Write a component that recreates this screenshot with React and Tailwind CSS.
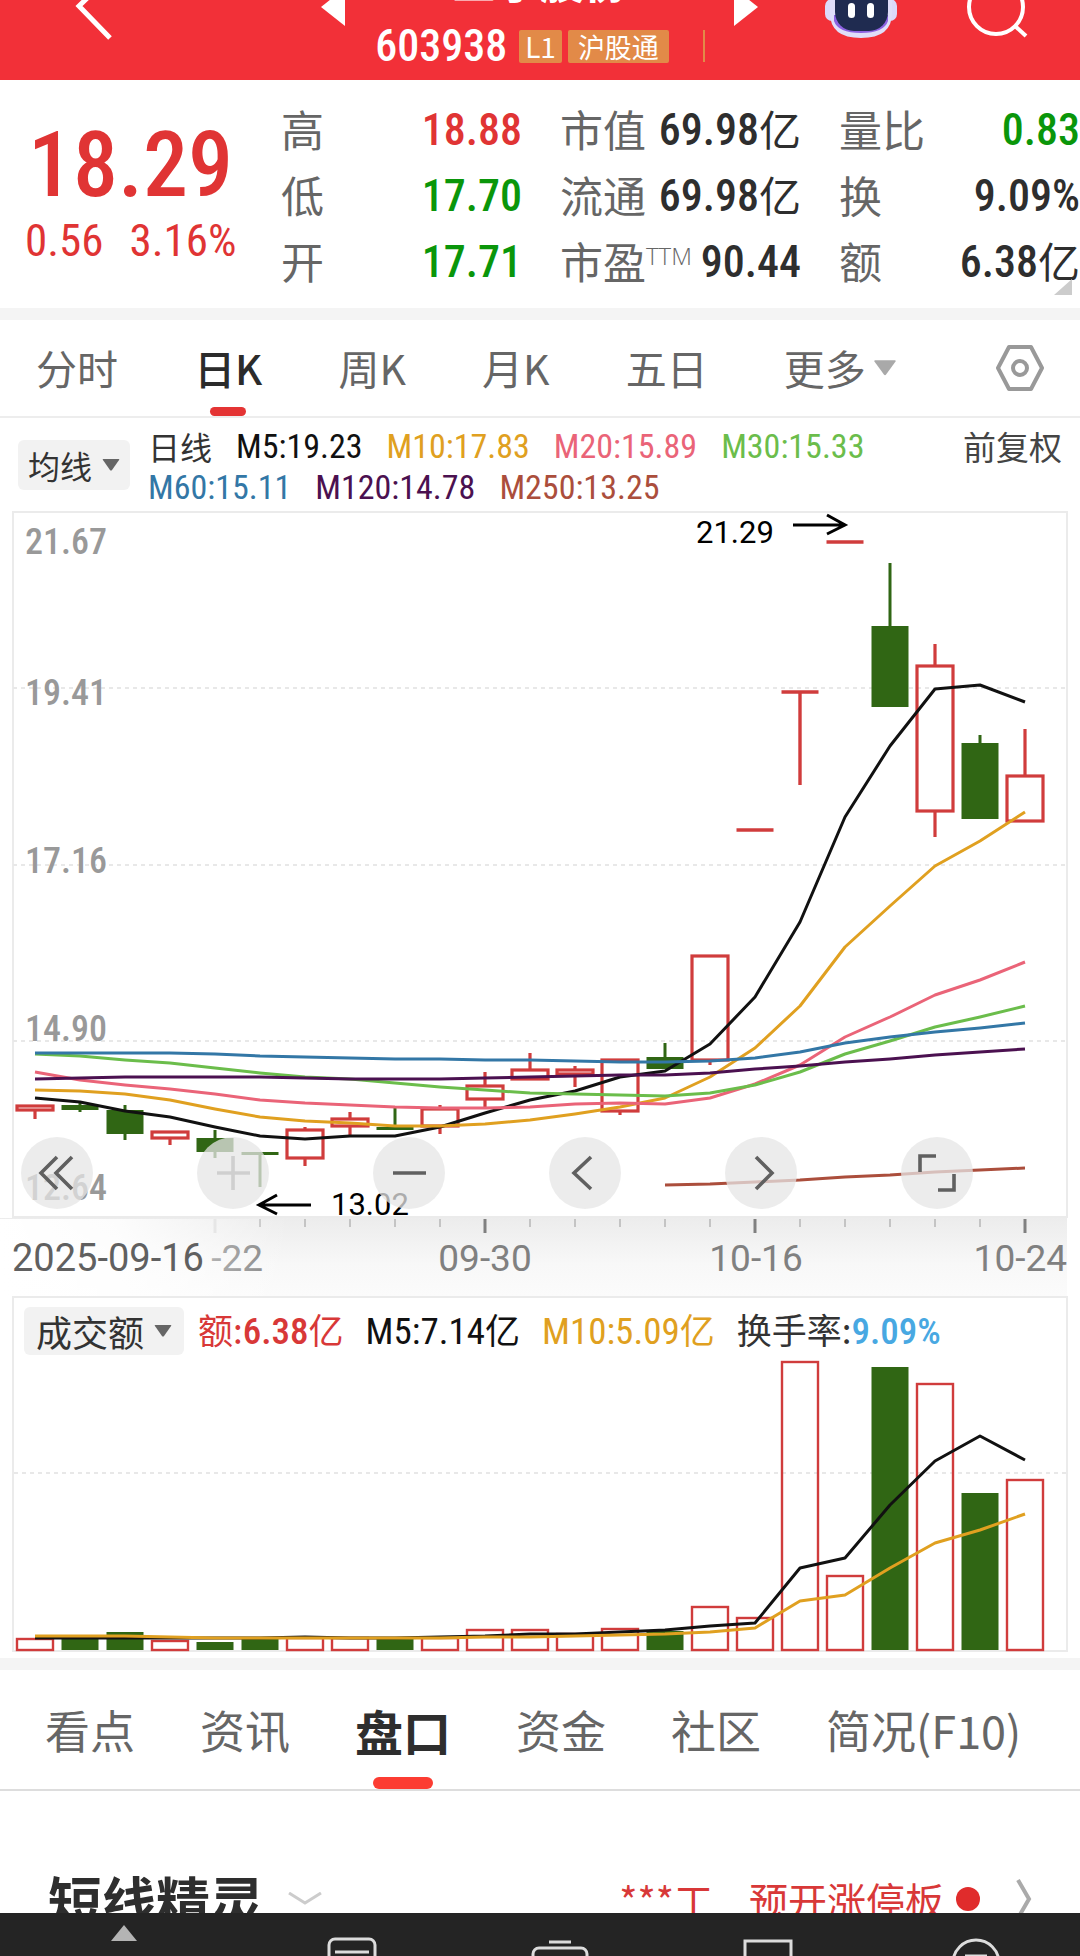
import React, { useState } from 'react';
import clsx from 'clsx';

const NUM = "font-['Roboto_Condensed',Roboto,'Noto_Sans_CJK_SC',sans-serif]";

const QUOTES = [
  [
    { label: '高', value: '18.88', color: 'text-[#e03434]' },
    { label: '低', value: '17.70', color: 'text-[#0a960a]' },
    { label: '开', value: '17.71', color: 'text-[#0a960a]' },
  ],
  [
    { label: '市值', value: '69.98', unit: '亿' },
    { label: '流通', value: '69.98', unit: '亿' },
    { label: '市盈', sup: 'TTM', value: '90.44' },
  ],
  [
    { label: '量比', value: '0.83', color: 'text-[#0a960a]' },
    { label: '换', value: '9.09%' },
    { label: '额', value: '6.38', unit: '亿' },
  ],
];

const PERIODS = ['分时', '日K', '周K', '月K', '五日', '更多'];

const AVERAGES = [
  [
    { text: 'M5:19.23', color: 'text-[#111111]' },
    { text: 'M10:17.83', color: 'text-[#e0a020]' },
    { text: 'M20:15.89', color: 'text-[#ea6478]' },
    { text: 'M30:15.33', color: 'text-[#6bbd4b]' },
  ],
  [
    { text: 'M60:15.11', color: 'text-[#3377a6]' },
    { text: 'M120:14.78', color: 'text-[#4b1150]' },
    { text: 'M250:13.25', color: 'text-[#ab4e3c]' },
  ],
];

const INFO_TABS = ['看点', '资讯', '盘口', '资金', '社区', '简况(F10)'];

const RED = '#d03c3c';
const GREEN = '#306614';
const xAt = (i) => 35 + i * 45;

// up/down, wick top, body top, body bottom, wick bottom
const CANDLES = [
  ['up', 1105, 1105, 1111, 1119],
  ['down', 1103, 1105, 1110, 1112],
  ['down', 1105, 1110, 1134, 1140],
  ['up', 1131, 1131, 1139, 1145],
  ['down', 1130, 1138, 1152, 1158],
  ['down', 1152, 1152, 1155, 1187],
  ['up', 1127, 1129, 1159, 1166],
  ['up', 1112, 1118, 1127, 1136],
  ['down', 1108, 1127, 1130, 1130],
  ['up', 1105, 1108, 1127, 1134],
  ['up', 1072, 1085, 1100, 1107],
  ['up', 1053, 1069, 1080, 1080],
  ['up', 1066, 1069, 1075, 1087],
  ['up', 1059, 1059, 1112, 1115],
  ['down', 1043, 1057, 1069, 1069],
  ['up', 955, 955, 1061, 1065],
  ['flat', 830, 830, 830, 830],
  ['flat', 692, 692, 692, 785],
  ['flat', 542, 542, 542, 542],
  ['down', 563, 626, 707, 707],
  ['up', 644, 665, 812, 837],
  ['down', 735, 743, 819, 819],
  ['up', 729, 775, 822, 822],
];

const LINES = [
  { color: '#ab4e3c', from: 14, ys: [1185, 1184, 1182, 1180, 1177, 1175, 1172, 1170, 1168] },
  { color: '#111111', from: 0, ys: [1098, 1102, 1111, 1117, 1127, 1136, 1139, 1136, 1136, 1127, 1113, 1100, 1091, 1077, 1071, 1044, 997, 922, 817, 746, 689, 685, 702] },
  { color: '#e0a020', from: 0, ys: [1090, 1091, 1094, 1100, 1109, 1117, 1121, 1123, 1126, 1126, 1124, 1120, 1114, 1107, 1098, 1077, 1048, 1006, 947, 906, 866, 841, 812] },
  { color: '#ea6478', from: 0, ys: [1072, 1080, 1085, 1089, 1094, 1100, 1103, 1105, 1107, 1108, 1108, 1107, 1104, 1103, 1104, 1098, 1084, 1065, 1037, 1017, 995, 980, 962] },
  { color: '#6bbd4b', from: 0, ys: [1054, 1056, 1060, 1063, 1068, 1073, 1077, 1079, 1083, 1087, 1090, 1093, 1094, 1095, 1096, 1093, 1085, 1072, 1054, 1041, 1027, 1017, 1006] },
  { color: '#3377a6', from: 0, ys: [1053, 1053, 1053, 1053, 1054, 1056, 1057, 1058, 1059, 1059, 1060, 1060, 1061, 1062, 1062, 1061, 1058, 1052, 1043, 1037, 1032, 1028, 1023] },
  { color: '#4b1150', from: 0, ys: [1079, 1078, 1077, 1077, 1077, 1077, 1078, 1079, 1079, 1079, 1078, 1077, 1076, 1075, 1075, 1073, 1069, 1066, 1062, 1059, 1055, 1052, 1049] },
];

const GRID = [688, 865, 1041];

const PRICE_LABELS = [
  { text: '21.67', y: 554 },
  { text: '19.41', y: 705 },
  { text: '17.16', y: 873 },
  { text: '14.90', y: 1041 },
  { text: '12.64', y: 1200 },
];

// top edge of each turnover bar, the base is 1650
const BARS = [1639, 1639, 1632, 1641, 1642, 1637, 1638, 1638, 1638, 1638, 1630, 1630, 1634, 1629, 1631, 1607, 1618, 1362, 1576, 1367, 1384, 1493, 1480];

const VOLUME_LINES = [
  { color: '#111111', from: 0, ys: [1638, 1638, 1638, 1638, 1638, 1638, 1637, 1638, 1638, 1637, 1636, 1634, 1634, 1632, 1630, 1626, 1623, 1568, 1558, 1505, 1461, 1436, 1460] },
  { color: '#e0a020', from: 0, ys: [1636, 1636, 1636, 1637, 1638, 1638, 1638, 1638, 1638, 1638, 1637, 1637, 1636, 1635, 1634, 1632, 1628, 1601, 1595, 1568, 1543, 1530, 1514] },
];

const Polyline = ({ line }) => (
  <polyline
    points={line.ys.map((y, i) => `${xAt(line.from + i)},${y}`).join(' ')}
    fill="none"
    stroke={line.color}
    strokeWidth="3"
    strokeLinejoin="round"
  />
);

const Candle = ({ index, data }) => {
  const [kind, high, top, bottom, low] = data;
  const x = xAt(index);
  if (kind === 'flat') {
    return <path d={`M${x - 18.5} ${top}h37M${x} ${top}V${low}`} stroke={RED} strokeWidth="3.4" fill="none" />;
  }
  if (kind === 'down') {
    return (
      <g fill={GREEN}>
        <rect x={x - 18.5} y={top} width="37" height={bottom - top} />
        <rect x={x - 1.5} y={high} width="3" height={low - high} />
      </g>
    );
  }
  return (
    <g stroke={RED} strokeWidth="3.2" fill="none">
      <rect x={x - 18} y={top + 1} width="36" height={bottom - top - 2} />
      <path d={`M${x} ${high}V${top}M${x} ${bottom}V${low}`} />
    </g>
  );
};

const Caret = ({ className }) => (
  <svg viewBox="0 0 20 14" className={className} fill="currentColor" aria-hidden="true">
    <path d="M1 0h18q1 0 .6 1L11 13q-1 1-2 0L.4 1Q0 0 1 0z" />
  </svg>
);

const CONTROLS = [
  { label: '最早', d: 'M36 20L20 36l16 16M51 20L35 36l16 16' },
  { label: '放大', d: 'M20 36h33M36 19v34', muted: true },
  { label: '缩小', d: 'M20 36h33' },
  { label: '向左', d: 'M42 20L25 36l17 16' },
  { label: '向右', d: 'M31 20l16 16-16 16' },
  { label: '全屏', d: 'M19 35V19h16M53 37v16H37' },
];

function Header() {
  return (
    <header className="relative flex h-20 flex-col items-center justify-end overflow-hidden bg-[#f23038] text-white">
      <button aria-label="返回" className="absolute bottom-[40px] left-[72px]">
        <svg viewBox="0 0 44 68" className="h-[68px] w-11" fill="none" stroke="currentColor" strokeWidth="5">
          <path d="M39 3L7 34l31 32" />
        </svg>
      </button>
      <button aria-label="上一只" className="absolute bottom-[54px] left-[321px]">
        <svg viewBox="0 0 24 38" className="h-[38px] w-6" fill="currentColor"><path d="M24 0v38L0 19z" /></svg>
      </button>
      <button aria-label="下一只" className="absolute right-[322px] bottom-[54px]">
        <svg viewBox="0 0 24 38" className="h-[38px] w-6" fill="currentColor"><path d="M0 0v38l24-19z" /></svg>
      </button>
      <h1 className="mb-6 text-[44px] leading-[52px] font-bold">三孚股份</h1>
      <div className="mb-[18px] flex h-8 items-center gap-1.5">
        <span className={clsx(NUM, 'mr-1.5 text-[44px] leading-8 font-medium')}>603938</span>
        <span className="rounded-xs bg-[#e28a48] px-1.5 text-[28px] leading-[33px]">L1</span>
        <span className="rounded-xs bg-[#e28a48] px-2.5 text-[27px] leading-[33px]">沪股通</span>
        <span className="ml-7 h-8 w-0.5 bg-[#e28a48]" />
      </div>
      <button aria-label="智能助手" className="absolute right-[183px] bottom-[41px]">
        <svg viewBox="0 0 72 76" className="h-[76px] w-[72px]">
          <rect x="0" y="36" width="72" height="22" rx="7" fill="#dcd9fa" />
          <path d="M5 36a31 31 0 0 1 62 0v14q0 25-31 25T5 50z" fill="#e0def9" />
          <path d="M9 58q4 12 27 12t27-12v-6H9z" fill="#8d62e0" />
          <rect x="10" y="14" width="53" height="54" rx="19" fill="#1f2b50" />
          <rect x="23" y="40" width="7" height="15" rx="3.5" fill="#fff" />
          <rect x="42" y="40" width="7" height="15" rx="3.5" fill="#fff" />
        </svg>
      </button>
      <button aria-label="搜索" className="absolute right-[51px] bottom-[42px]">
        <svg viewBox="0 0 64 64" className="size-16" fill="none" stroke="currentColor" strokeWidth="4">
          <circle cx="31" cy="33" r="27" />
          <path d="M50 52l11 10" />
        </svg>
      </button>
    </header>
  );
}

function Quote() {
  return (
    <section className="relative grid grid-cols-[243px_minmax(0,1fr)_minmax(0,1fr)_minmax(0,1fr)] gap-x-[38px] border-b-12 border-[#f4f4f4] pt-[17px] pb-[13px]">
      <div className="-mr-[38px] flex flex-col items-start pt-3 text-[#e03434]">
        <strong className={clsx(NUM, 'pl-7 text-[90px] leading-[114px] font-medium')}>18.29</strong>
        <div className={clsx(NUM, 'flex gap-[26px] pl-[25px] text-[45px] leading-9')}>
          <span>0.56</span>
          <span>3.16%</span>
        </div>
      </div>
      {QUOTES.map((column, i) => (
        <dl key={i}>
          {column.map((row) => (
            <div key={row.label} className="flex h-[66px] items-center justify-between whitespace-nowrap">
              <dt className="flex pb-1 text-[43px] leading-[62px] text-[#666666]">
                {row.label}
                {row.sup && <sup className="top-0 font-['Open_Sans',sans-serif] text-[24px] leading-[54px] font-light">{row.sup}</sup>}
              </dt>
              <dd className={clsx('flex items-center', row.color || 'text-[#2e2e2e]')}>
                <span className={clsx(NUM, 'text-[44px] font-medium')}>{row.value}</span>
                {row.unit && <span className="pb-1 text-[42px] leading-[62px]">{row.unit}</span>}
              </dd>
            </div>
          ))}
        </dl>
      ))}
      <svg viewBox="0 0 18 16" className="absolute right-2 bottom-[13px] h-4 w-[18px]"><path d="M18 0v16H0z" fill="#cccccc" /></svg>
    </section>
  );
}

function PeriodTabs() {
  const [active, setActive] = useState('日K');
  return (
    <nav className="flex items-center justify-between border-b-2 border-[#ededed] pr-9 pl-9">
      {PERIODS.map((name) => (
        <button
          key={name}
          onClick={() => setActive(name)}
          className={clsx('relative flex h-24 items-center gap-2 text-[41px]', name === active ? 'font-medium text-[#2b2b2b]' : 'text-[#666666]')}
        >
          {name}
          {name === '更多' && <Caret className="h-[18px] w-[22px] text-[#a9a9a9]" />}
          {name === active && <span className="absolute bottom-0 left-1/2 h-[9px] w-9 -translate-x-1/2 rounded-full bg-[#e43434]" />}
        </button>
      ))}
      <button aria-label="设置" className="ml-6">
        <svg viewBox="0 0 48 46" className="h-[46px] w-12" fill="none" stroke="#999999" strokeWidth="4" strokeLinejoin="round">
          <path d="M13 2h22l11 21-11 21H13L2 23z" />
          <circle cx="24" cy="23" r="7" />
        </svg>
      </button>
    </nav>
  );
}

function AverageBar() {
  return (
    <div className="flex items-start gap-[18px] px-[18px] pt-2 pb-[3px] whitespace-nowrap">
      <button className="mt-3.5 flex h-[50px] items-center gap-2.5 rounded-md bg-[#f2f2f2] px-2.5 text-[32px] text-[#333333]">
        均线
        <Caret className="h-3 w-[18px] text-[#666666]" />
      </button>
      <div className="flex flex-1 flex-col">
        {AVERAGES.map((line, i) => (
          <div key={i} className="flex h-[41px] items-center gap-6">
            {i === 0 && <span className="text-[32px] leading-[37px] text-[#333333]">日线</span>}
            {line.map((item) => (
              <span key={item.text} className={clsx(NUM, 'text-[34px]', item.color)}>{item.text}</span>
            ))}
          </div>
        ))}
      </div>
      <button className="h-[41px] text-[33px] leading-[41px] text-[#444444]">前复权</button>
    </div>
  );
}

function PriceChart() {
  return (
    <section className="relative">
      <svg viewBox="0 511 1080 785" className="block h-auto w-full" role="img" aria-label="日K">
        <defs>
          <linearGradient id="axis" x1="0" y1="0" x2="0" y2="1">
            <stop offset="0" stopColor="#ececec" />
            <stop offset="0.6" stopColor="#f8f8f8" />
            <stop offset="1" stopColor="#fbfbfb" />
          </linearGradient>
          <linearGradient id="edge" x1="0" y1="0" x2="1" y2="0">
            <stop offset="0" stopColor="#ffffff" />
            <stop offset="0.4" stopColor="#ffffff" stopOpacity="0.85" />
            <stop offset="1" stopColor="#ffffff" stopOpacity="0" />
          </linearGradient>
        </defs>
        <rect x="0" y="1218" width="1067" height="78" fill="url(#axis)" />
        <rect x="13" y="512" width="1054" height="705" fill="#ffffff" stroke="#ebebeb" strokeWidth="2" />
        {GRID.map((y) => (
          <path key={y} d={`M13 ${y}H1067`} stroke="#e8e8e8" strokeWidth="2" strokeDasharray="4 4" />
        ))}
        {PRICE_LABELS.map((label) => (
          <text key={label.text} x="25" y={label.y} className={clsx(NUM, 'fill-[#999999] text-[36px] font-medium')}>{label.text}</text>
        ))}
        {CANDLES.map((data, i) => <Candle key={i} index={i} data={data} />)}
        {LINES.map((line) => <Polyline key={line.color} line={line} />)}
        <g className="fill-black font-[Roboto,sans-serif] text-[31px]">
          <text x="696" y="543">21.29</text>
          <text x="331" y="1215">13.02</text>
        </g>
        <g fill="none" stroke="#000000" strokeWidth="3">
          <path d="M793 525h51M827 515l18 10-18 9" />
          <path d="M311 1205h-51M277 1195l-18 10 18 9" />
        </g>
        {CANDLES.map((_, i) => i > 4 && (
          i % 6 === 4
            ? <path key={i} d={`M${xAt(i)} 1219v14`} stroke="#808080" strokeWidth="3" />
            : <path key={i} d={`M${xAt(i)} 1219v8`} stroke="#c4c4c4" strokeWidth="2" />
        ))}
        <path d="M215 1219v14" stroke="#d8d8d8" strokeWidth="3" />
        <g className="fill-[#808080] font-[Roboto,sans-serif] text-[37px]">
          <text x="485" y="1271" textAnchor="middle">09-30</text>
          <text x="756" y="1271" textAnchor="middle">10-16</text>
          <text x="1067" y="1271" textAnchor="end">10-24</text>
          <text x="263" y="1271" textAnchor="end">-22</text>
        </g>
        <rect x="0" y="1219" width="290" height="77" fill="url(#edge)" />
        <text x="12" y="1271" className="fill-[#606060] font-[Roboto,sans-serif] text-[38px]">2025-09-16</text>
      </svg>
      <div className="absolute bottom-[87px] left-[21px] flex gap-[104px]">
        {CONTROLS.map((control) => (
          <button key={control.label} aria-label={control.label} className="size-[72px] rounded-full bg-[#e6e6e6]/75">
            <svg viewBox="0 0 72 72" className={clsx('size-full', control.muted ? 'text-[#cfcfcf]' : 'text-[#606060]')} fill="none" stroke="currentColor" strokeWidth="3.6">
              <path d={control.d} />
            </svg>
          </button>
        ))}
      </div>
    </section>
  );
}

function VolumeChart() {
  return (
    <section className="border-b-12 border-[#f4f4f4] pb-[6px]">
      <div className="mx-[12px] border-2 border-[#ebebeb]">
        <div className="flex h-[62px] items-center gap-[22px] pt-1 pl-2.5 text-[35px] whitespace-nowrap">
          <button className="-mr-2 flex h-12 items-center gap-2.5 rounded-md bg-[#f2f2f2] px-3 text-[36px] text-[#333333]">
            成交额
            <Caret className="h-3 w-[18px] text-[#666666]" />
          </button>
          <span className="text-[#d83838]">额:<span className={clsx(NUM, 'text-[37px] font-medium')}>6.38</span>亿</span>
          <span className="text-[#111111]"><span className={clsx(NUM, 'text-[37px]')}>M5:7.14</span>亿</span>
          <span className="text-[#e0a020]"><span className={clsx(NUM, 'text-[37px]')}>M10:5.09</span>亿</span>
          <span className="text-[#333333]">换手率:<span className={clsx(NUM, 'text-[37px] font-medium text-[#48a8e2]')}>9.09%</span></span>
        </div>
        <svg viewBox="14 1360 1052 290" className="block h-auto w-full overflow-visible" role="img" aria-label="成交额">
          <path d="M14 1473H1066" stroke="#e8e8e8" strokeWidth="2" strokeDasharray="4 4" />
          {BARS.map((top, i) => (
            CANDLES[i][0] === 'down'
              ? <rect key={i} x={xAt(i) - 18.5} y={top} width="37" height={1650 - top} fill={GREEN} />
              : <rect key={i} x={xAt(i) - 18} y={top} width="36" height={1650 - top} fill="none" stroke={RED} strokeWidth="2.4" />
          ))}
          {VOLUME_LINES.map((line) => <Polyline key={line.color} line={line} />)}
        </svg>
      </div>
    </section>
  );
}

function InfoTabs() {
  const [active, setActive] = useState('盘口');
  return (
    <nav className="flex gap-[65px] border-b-2 border-[#dddddd] pl-[45px] whitespace-nowrap">
      {INFO_TABS.map((name) => (
        <button
          key={name}
          onClick={() => setActive(name)}
          className={clsx('relative h-[119px]', name === active ? 'text-[48px] font-bold text-[#2e2e2e]' : 'text-[45px] text-[#666666]')}
        >
          {name}
          {name === active && <span className="absolute bottom-0 left-1/2 h-3 w-15 -translate-x-1/2 rounded-full bg-[#fc3c32]" />}
        </button>
      ))}
    </nav>
  );
}

function Signals() {
  return (
    <section className="flex h-[166px] items-center pt-[50px] pr-[48px] pl-[48px]">
      <h2 className="text-[54px] font-bold text-[#2e2e2e]">短线精灵</h2>
      <svg viewBox="0 0 34 14" className="ml-6 h-3.5 w-[34px]" fill="none" stroke="#cccccc" strokeWidth="3"><path d="M1 1l16 10L33 1" /></svg>
      <a href="#signals" className="ml-auto flex items-center text-[39px] text-[#d83838]">
        ***工
        <span className="ml-9">预开涨停板</span>
        <span className="ml-3 size-6 rounded-full bg-[#e02c2c]" />
        <svg viewBox="0 0 16 40" className="ml-9 h-10 w-4" fill="none" stroke="#aaaaaa" strokeWidth="4"><path d="M2 1l11 19L2 39" /></svg>
      </a>
    </section>
  );
}

function BottomBar() {
  return (
    <footer className="fixed inset-x-0 bottom-0 h-[43px] overflow-hidden bg-[#242424] pl-10 text-[#dcdcdc]">
      <div className="grid h-20 grid-cols-5 justify-items-center">
        <button aria-label="展开" className="mr-10 self-start pt-3">
          <svg viewBox="0 0 26 16" className="h-4 w-[26px]" fill="#b4b4b4"><path d="M13 0l13 16H0z" /></svg>
        </button>
        <button aria-label="列表" className="self-start pt-6">
          <svg viewBox="0 0 50 50" className="size-[50px]" fill="none" stroke="currentColor" strokeWidth="3">
            <rect x="2" y="2" width="46" height="46" rx="6" />
            <path d="M8 15h34M8 29h34" />
          </svg>
        </button>
        <button aria-label="交易" className="self-start pt-[27px]">
          <svg viewBox="0 0 58 46" className="h-[46px] w-[58px]" fill="none" stroke="currentColor" strokeWidth="3">
            <path d="M18 2h22" />
            <rect x="2" y="8" width="54" height="36" rx="6" />
          </svg>
        </button>
        <button aria-label="窗口" className="self-start pt-6">
          <svg viewBox="0 0 50 50" className="size-[50px]" fill="none" stroke="currentColor" strokeWidth="3">
            <path d="M2 4h46v44H2z" />
          </svg>
        </button>
        <button aria-label="更多" className="self-start pt-6">
          <svg viewBox="0 0 50 50" className="size-[50px]" fill="none" stroke="currentColor" strokeWidth="3">
            <circle cx="25" cy="26" r="23" />
            <path d="M14 19h22M14 29h22" />
          </svg>
        </button>
      </div>
    </footer>
  );
}

export default function App() {
  return (
    <div className="min-h-screen bg-white font-['Noto_Sans_CJK_SC',sans-serif]">
      <Header />
      <Quote />
      <PeriodTabs />
      <AverageBar />
      <PriceChart />
      <VolumeChart />
      <InfoTabs />
      <Signals />
      <BottomBar />
    </div>
  );
}
